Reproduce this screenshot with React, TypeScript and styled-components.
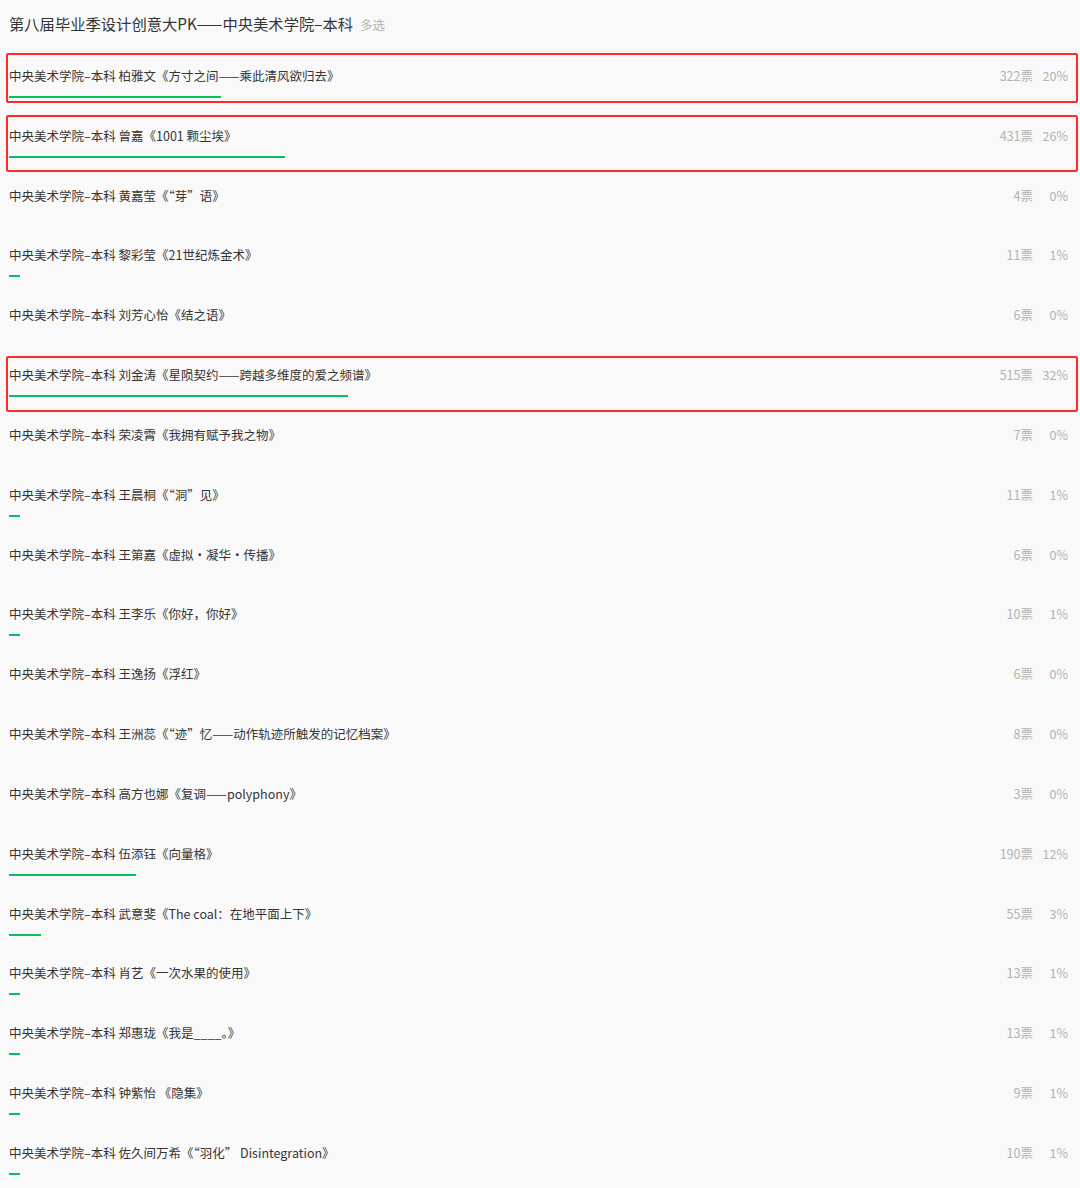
import styled, { createGlobalStyle } from "styled-components";

const GlobalStyle = createGlobalStyle`
  html, body {
    margin: 0;
    padding: 0;
    background: #f9f9f9;
  }
  body {
    font-family: "Noto Sans CJK SC", "Noto Sans", sans-serif;
    color: #353535;
  }
`;

type Option = {
  name: string;
  votes: number;
  pct: number;
  mark?: [number, number];
};

const options: Option[] = [
  { name: "中央美术学院–本科 柏雅文《方寸之间——乘此清风欲归去》", votes: 322, pct: 20, mark: [-2, 12] },
  { name: "中央美术学院–本科 曾嘉《1001 颗尘埃》", votes: 431, pct: 26, mark: [0, 3] },
  { name: "中央美术学院–本科 黄嘉莹《“芽”语》", votes: 4, pct: 0 },
  { name: "中央美术学院–本科 黎彩莹《21世纪炼金术》", votes: 11, pct: 1 },
  { name: "中央美术学院–本科 刘芳心怡《结之语》", votes: 6, pct: 0 },
  { name: "中央美术学院–本科 刘金涛《星陨契约——跨越多维度的爱之频谱》", votes: 515, pct: 32, mark: [2, 2] },
  { name: "中央美术学院–本科 荣凌霄《我拥有赋予我之物》", votes: 7, pct: 0 },
  { name: "中央美术学院–本科 王晨桐《“洞”见》", votes: 11, pct: 1 },
  { name: "中央美术学院–本科 王第嘉《虚拟·凝华·传播》", votes: 6, pct: 0 },
  { name: "中央美术学院–本科 王李乐《你好，你好》", votes: 10, pct: 1 },
  { name: "中央美术学院–本科 王逸扬《浮红》", votes: 6, pct: 0 },
  { name: "中央美术学院–本科 王洲蕊《“迹”忆——动作轨迹所触发的记忆档案》", votes: 8, pct: 0 },
  { name: "中央美术学院–本科 高方也娜《复调——polyphony》", votes: 3, pct: 0 },
  { name: "中央美术学院–本科 伍添钰《向量格》", votes: 190, pct: 12 },
  { name: "中央美术学院–本科 武意斐《The coal：在地平面上下》", votes: 55, pct: 3 },
  { name: "中央美术学院–本科 肖艺《一次水果的使用》", votes: 13, pct: 1 },
  { name: "中央美术学院–本科 郑惠珑《我是____。》", votes: 13, pct: 1 },
  { name: "中央美术学院–本科 钟紫怡 《隐集》", votes: 9, pct: 1 },
  { name: "中央美术学院–本科 佐久间万希《“羽化” Disintegration》", votes: 10, pct: 1 },
];

const Page = styled.div`
  width: 1080px;
  min-height: 1188px;
  background: #f9f9f9;
`;

const Header = styled.div`
  display: flex;
  align-items: baseline;
  gap: 7px;
  padding: 12px 9px 0;
  height: 55px;
  box-sizing: border-box;
`;

const Title = styled.h2`
  margin: 0;
  font-size: 15.3px;
  font-weight: 400;
  line-height: 22px;
  color: #353535;
`;

const Tag = styled.span`
  font-size: 12.5px;
  color: #b2b2b2;
`;

const List = styled.div`
  display: flex;
  flex-direction: column;
`;

const Row = styled.div<{ $mark?: [number, number] }>`
  position: relative;
  height: 59.83px;
  padding: 0 12px 0 9px;
  box-sizing: border-box;

  &::after {
    content: "";
    display: ${(p) => (p.$mark ? "block" : "none")};
    position: absolute;
    left: 6px;
    right: 2px;
    top: ${(p) => (p.$mark ? p.$mark[0] : 0)}px;
    bottom: ${(p) => (p.$mark ? p.$mark[1] : 0)}px;
    border: 2.5px solid #ff2a2a;
    border-radius: 2px;
    pointer-events: none;
  }
`;

const Line = styled.div`
  display: flex;
  align-items: center;
  height: 41px;
`;

const Name = styled.span`
  flex: 1;
  font-size: 12.5px;
  color: #353535;
  white-space: nowrap;
`;

const Votes = styled.span`
  font-size: 12.5px;
  color: #b2b2b2;
  text-align: right;
`;

const Percent = styled.span`
  width: 35px;
  font-size: 12.5px;
  color: #b2b2b2;
  text-align: right;
`;

const Track = styled.div`
  height: 2px;
  width: 1060px;
`;

const Fill = styled.div`
  height: 100%;
  background: #07c160;
`;

export default function App() {
  return (
    <Page>
      <GlobalStyle />
      <Header>
        <Title>第八届毕业季设计创意大PK——中央美术学院–本科</Title>
        <Tag>多选</Tag>
      </Header>
      <List>
        {options.map((o) => (
          <Row key={o.name} $mark={o.mark}>
            <Line>
              <Name>{o.name}</Name>
              <Votes>{o.votes}票</Votes>
              <Percent>{o.pct}%</Percent>
            </Line>
            <Track>
              <Fill style={{ width: `${o.pct}%` }} />
            </Track>
          </Row>
        ))}
      </List>
    </Page>
  );
}
